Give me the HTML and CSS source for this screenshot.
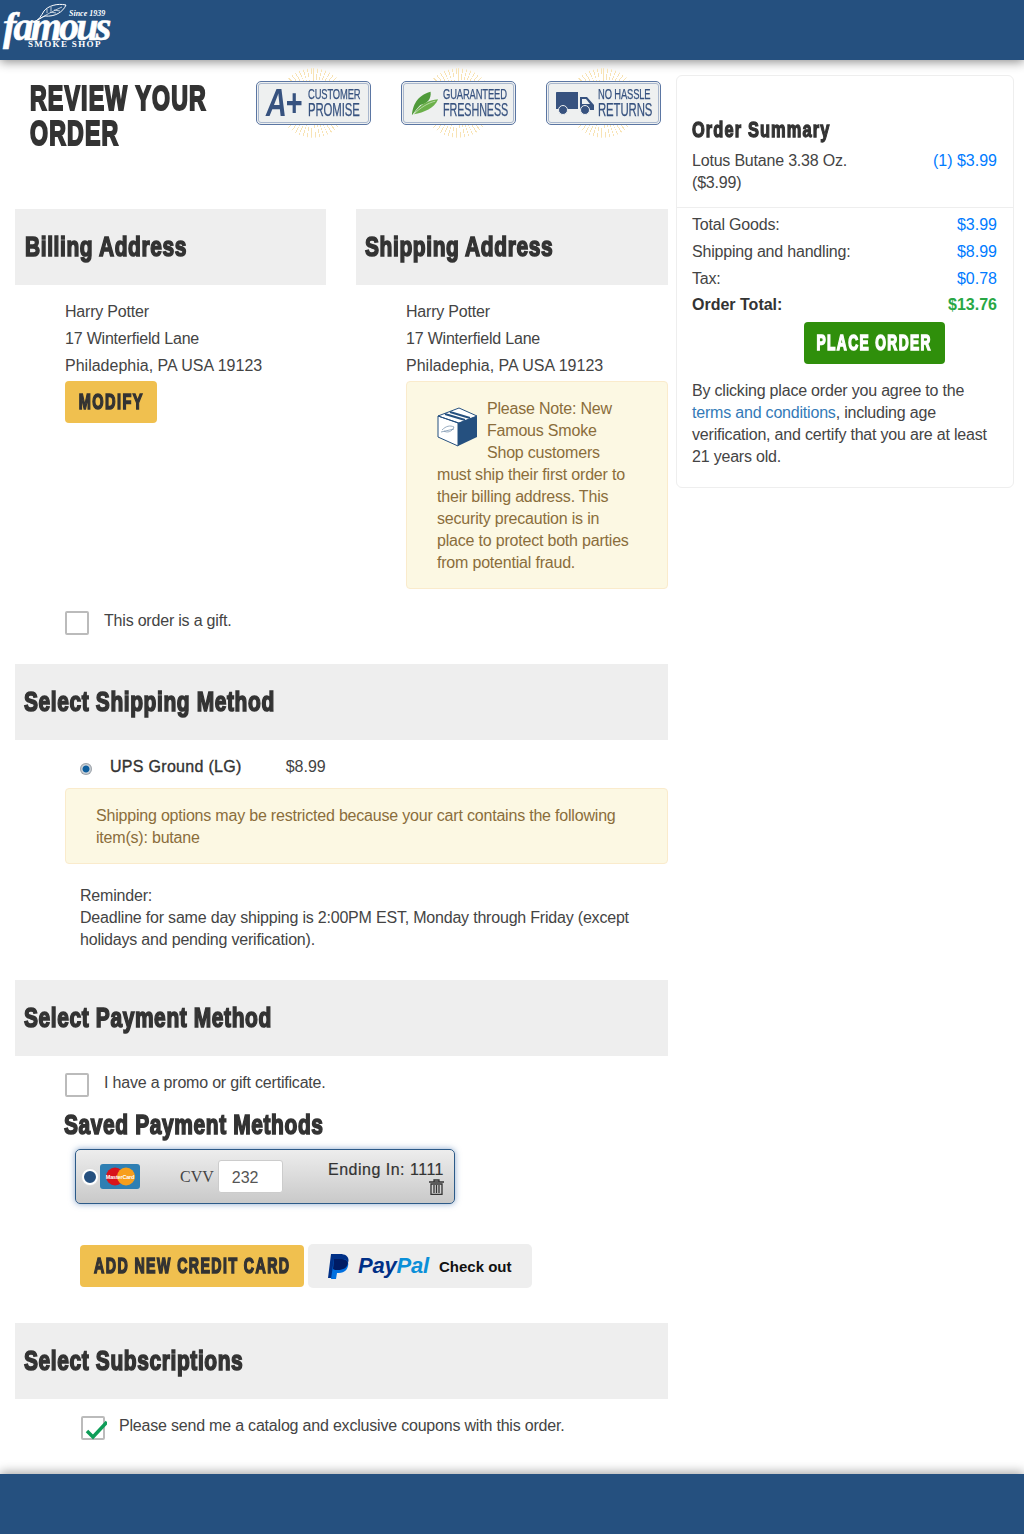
FILE: index.html
```html
<!DOCTYPE html>
<html lang="en">
<head>
<meta charset="utf-8">
<title>Review Your Order</title>
<link rel="stylesheet" href="styles.css">
</head>
<body>
<header class="site-header">
  <div class="logo">
    <svg class="logo-leaf" viewBox="0 0 34 20"><path d="M1 19C6 17 8 13 11 8C15 3 24 0 33 2C30 9 22 14 12 13C9 14 5 17 1 19Z" fill="none" stroke="#fff" stroke-width="1"/><path d="M6 16C13 12 20 8 29 4M14 10L14 6M18 8L18 4M17 9L23 10M21 7L27 8" fill="none" stroke="#fff" stroke-width=".7"/></svg>
    <span class="logo-since">Since 1939</span>
    <span class="logo-name">famous</span>
    <span class="logo-sub">SMOKE SHOP</span>
  </div>
</header>
<main class="layout">
  <div class="main-col">
    <div class="top-row">
      <h1 class="page-title"><span class="squeeze">REVIEW YOUR</span><span class="squeeze">ORDER</span></h1>
      <div class="badges">
        <div class="badge"><span class="rays"></span><div class="badge-box">
          <span class="badge-aplus">A+</span>
          <span class="badge-text"><span>CUSTOMER</span><b>PROMISE</b></span>
        </div></div>
        <div class="badge"><span class="rays"></span><div class="badge-box">
          <svg class="badge-icon" viewBox="0 0 30 27"><path d="M1 26C2 16 6 5 21 1C22 9 17 14 10 15C7 18 4 22 1 26Z" fill="#4f9a3a"/><path d="M3 25C9 14 19 10 29 9C25 19 14 23 3 25Z" fill="#6bb04a"/><path d="M3 25C10 18 18 13 26 11" stroke="#dcecd0" stroke-width=".7" fill="none"/></svg>
          <span class="badge-text fresh"><span>GUARANTEED</span><b>FRESHNESS</b></span>
        </div></div>
        <div class="badge"><span class="rays"></span><div class="badge-box">
          <svg class="badge-icon truck" viewBox="0 0 38 23"><path d="M0 1C0 .4.4 0 1 0H22V17H0ZM24 5H31L38 13V18H24Z" fill="#37527f"/><path d="M26 7H30L34 12H26Z" fill="#eef0f0"/><circle cx="7" cy="18" r="4.5" fill="#37527f" stroke="#eef0f0"/><circle cx="29" cy="18" r="4.5" fill="#37527f" stroke="#eef0f0"/></svg>
          <span class="badge-text"><span>NO HASSLE</span><b>RETURNS</b></span>
        </div></div>
      </div>
    </div>

    <div class="address-row">
      <section class="address">
        <h2 class="band"><span class="squeeze">Billing Address</span></h2>
        <div class="address-body">
          <p>Harry Potter</p>
          <p>17 Winterfield Lane</p>
          <p class="city">Philadephia, PA USA 19123</p>
          <button class="btn btn-yellow btn-modify"><span class="squeeze">MODIFY</span></button>
        </div>
      </section>
      <section class="address">
        <h2 class="band"><span class="squeeze">Shipping Address</span></h2>
        <div class="address-body">
          <p>Harry Potter</p>
          <p>17 Winterfield Lane</p>
          <p class="city">Philadephia, PA USA 19123</p>
          <div class="alert alert-note">
            <svg class="box-icon" viewBox="0 0 40 40"><path d="M1 9L22 1L40 9L22 16ZM1 9V30L21 39V16Z" fill="#fff" stroke="#25507f"/><path d="M21 16L40 9V30L21 39Z" fill="#25507f"/><path d="M8 7L28 13M13 5L33 11" stroke="#25507f" stroke-width="2"/><path d="M5 23C9 19 13 18 17 20C15 25 10 26 7 24M4 25L17 22" fill="none" stroke="#6f8aa8" stroke-width=".7"/></svg>
            Please Note: New Famous Smoke Shop customers must ship their first order to their billing address. This security precaution is in place to protect both parties from potential fraud.
          </div>
        </div>
      </section>
    </div>

    <label class="check-row gift"><span class="checkbox"></span>This order is a gift.</label>

    <h2 class="band band-full shipping-band"><span class="squeeze">Select Shipping Method</span></h2>
    <div class="ship-option"><span class="radio-small"></span><span class="ship-name">UPS Ground (LG)</span><span class="price">$8.99</span></div>
    <div class="alert alert-ship">Shipping options may be restricted because your cart contains the following item(s): butane</div>
    <p class="reminder">Reminder:<br>Deadline for same day shipping is 2:00PM EST, Monday through Friday (except holidays and pending verification).</p>

    <h2 class="band band-full payment-band"><span class="squeeze">Select Payment Method</span></h2>
    <label class="check-row promo"><span class="checkbox"></span>I have a promo or gift certificate.</label>
    <h3 class="saved-title"><span class="squeeze">Saved Payment Methods</span></h3>
    <div class="saved-card">
      <span class="radio-big"></span>
      <svg class="mc-icon" viewBox="0 0 40 25"><rect width="40" height="25" rx="3" fill="#2f7fb3"/><circle cx="15" cy="12.500" r="9" fill="#d8131b"/><circle cx="26" cy="12.500" r="9" fill="#f79e1b"/><text x="20" y="14.500" class="mc-text">MasterCard</text></svg>
      <span class="cvv-label">CVV</span>
      <span class="cvv-input">232</span>
      <span class="ending">Ending In: 1111</span>
      <svg class="trash" viewBox="0 0 15 16"><path d="M0 3H15M5 3V1H10V3M2 5V15.500H13V5ZM5 6V14M7.500 6V14M10 6V14" fill="none" stroke="#333" stroke-width="1.300"/></svg>
    </div>
    <div class="pay-actions">
      <button class="btn btn-yellow btn-add"><span class="squeeze">ADD NEW CREDIT CARD</span></button>
      <div class="paypal">
        <svg class="pp-mark" viewBox="0 0 22 25"><path d="M3 0H12C18 0 22 3 20 9C19 14 15 16 10 16H7L5 24H0Z" fill="#003087"/><path d="M6 5H14C19 5 21 8 20 12C19 17 15 19 11 19H9L8 25H3Z" fill="#0070e0"/><path d="M6 5H14C17 5 19 6 20 9C19 14 15 16 10 16H7L5 15Z" fill="#001c64"/></svg>
        <span class="pp-word"><i>Pay</i><em>Pal</em></span>
        <span class="pp-check">Check out</span>
      </div>
    </div>

    <h2 class="band band-full subs-band"><span class="squeeze">Select Subscriptions</span></h2>
    <label class="check-row catalog"><span class="checkbox"><svg class="tick" viewBox="0 0 24 24"><path d="M4 15L10 21L24 6" fill="none" stroke="#0e9d58" stroke-width="3.500"/></svg></span>Please send me a catalog and exclusive coupons with this order.</label>
  </div>

  <aside class="summary">
    <div class="summary-top">
      <h3 class="summary-title"><span class="squeeze">Order Summary</span></h3>
      <div class="item"><span class="item-name">Lotus Butane 3.38 Oz. ($3.99)</span><span class="blue">(1) $3.99</span></div>
    </div>
    <div class="summary-bottom">
      <div class="total-row"><span>Total Goods:</span><span class="blue">$3.99</span></div>
      <div class="total-row"><span>Shipping and handling:</span><span class="blue">$8.99</span></div>
      <div class="total-row short"><span>Tax:</span><span class="blue">$0.78</span></div>
      <div class="total-row grand"><span>Order Total:</span><span class="green">$13.76</span></div>
      <div class="place-wrap"><button class="btn btn-green"><span class="squeeze">PLACE ORDER</span></button></div>
      <p class="terms">By clicking place order you agree to the <a href="#">terms and conditions</a>, including age verification, and certify that you are at least 21 years old.</p>
    </div>
  </aside>
</main>
<footer class="site-footer"></footer>
</body>
</html>
```
FILE: styles.css
```css
* { box-sizing: border-box; }
html, body { margin: 0; padding: 0; }
body {
  font-family: "Liberation Sans", Arial, sans-serif;
  font-size: 16px;
  line-height: 22px;
  letter-spacing: -.2px;
  color: #444;
  background: #fff;
  width: 1024px;
  height: 1534px;
  overflow: hidden;
}
p { margin: 0; }

/* header and footer */
.site-header {
  height: 60px;
  background: #25507f;
  box-shadow: 0 2px 10px rgba(0, 0, 0, .45);
  position: relative;
}
.logo { position: relative; width: 115px; height: 60px; color: #fff; }
.logo-leaf { position: absolute; left: 33px; top: 3px; width: 34px; height: 20px; }
.logo-since {
  position: absolute; left: 69px; top: 8px;
  font: italic 700 8px/12px "Liberation Serif", serif;
  letter-spacing: 0;
}
.logo-name {
  position: absolute; left: 3px; top: 6px;
  font: italic 700 40px/42px "Liberation Serif", serif;
  letter-spacing: -2.800px;
  -webkit-text-stroke: .6px #fff;
}
.logo-sub {
  position: absolute; left: 28px; top: 38px;
  font: 700 9px/12px "Liberation Serif", serif;
  letter-spacing: 1.350px;
}
.site-footer {
  position: absolute;
  left: 0; right: 0; top: 1474px;
  height: 60px;
  background: #25507f;
  box-shadow: 0 -2px 10px rgba(0, 0, 0, .35);
}

/* layout */
.layout { display: flex; align-items: flex-start; padding-left: 15px; gap: 8px; }
.main-col { width: 653px; flex: none; }

/* heavy display type: the regular bold squeezed to a condensed width */
.page-title, .band, .saved-title, .summary-title, .btn {
  font-family: "Liberation Sans", sans-serif;
  font-weight: 700;
  -webkit-text-stroke: 1.600px #333;
  color: #333;
  margin: 0;
}
.squeeze {
  display: block;
  white-space: nowrap;
  transform: scaleX(var(--squeeze, .775));
  transform-origin: left center;
}

.top-row { display: flex; height: 149px; padding-top: 20px; }
.page-title {
  --squeeze: .66;
  width: 226px; padding-left: 15px;
  font-size: 35px; line-height: 35px; letter-spacing: 1.800px;
  -webkit-text-stroke-width: 2.200px;
}
.badges { display: flex; gap: 30px; margin-left: 15px; }
.badge { position: relative; width: 115px; height: 70px; margin-top: -12px; }
.rays {
  position: absolute; left: 22px; top: 0; width: 70px; height: 70px;
  border-radius: 50%;
  background: repeating-conic-gradient(#f8e3b4 0 1.500deg, transparent 1.500deg 7deg);
  -webkit-mask: radial-gradient(circle, transparent 20px, #000 21px);
  mask: radial-gradient(circle, transparent 20px, #000 21px);
}
.badge-box {
  position: absolute; left: 0; top: 13px; width: 115px; height: 44px;
  display: flex; align-items: center;
  padding-left: 9px; gap: 4px;
  background: #eef0f0;
  border: 1px solid #5b76a3;
  outline: 1px solid #a9b7cd;
  outline-offset: -3px;
  border-radius: 5px;
  color: #37527f;
}
.badge-aplus {
  font: italic 700 38px/34px "Liberation Sans", sans-serif;
  letter-spacing: -2px; width: 38px; flex: none;
  transform: scaleX(.76); transform-origin: left center;
  white-space: nowrap;
}
.badge-icon { width: 28px; height: 27px; flex: none; }
.truck { width: 38px; height: 23px; }
.badge-text {
  display: flex; flex-direction: column;
  font: 400 14px/13px "Liberation Sans", sans-serif;
  letter-spacing: -.200px;
  white-space: nowrap;
  -webkit-text-stroke: .25px #37527f;
}
.badge-text span { transform: scaleX(.67); transform-origin: left center; }
.badge-text b {
  font-weight: 400; font-size: 19px; line-height: 17px;
  transform: scaleX(.6); transform-origin: left center;
}
.fresh b { transform: scaleX(.57); }

/* section bands */
.band {
  background: #eee;
  height: 76px;
  font-size: 27px;
  line-height: 76px;
  letter-spacing: .800px;
}
.address-row { display: grid; grid-template-columns: 311px 312px; column-gap: 30px; }
.address .band { padding-left: 10px; }
.address:last-child .band { padding-left: 9px; }
.band-full { padding-left: 9px; }

.address-body { padding: 13px 0 0 50px; line-height: 27px; }
.city { letter-spacing: 0; }
.alert {
  background: #fcf8e3;
  border: 1px solid #faebcc;
  border-radius: 4px;
  color: #8a6d3b;
  line-height: 22px;
}
.alert-note { margin-top: 2px; padding: 16px 30px 5px; height: 208px; }
.box-icon { float: left; width: 40px; height: 40px; margin: 9px 10px 10px 0; }

.btn {
  display: flex;
  align-items: center;
  justify-content: center;
  border: 0;
  border-radius: 4px;
  height: 42px;
  font-size: 22px;
  line-height: 42px;
  letter-spacing: 2.200px;
  padding: 0;
}
.btn .squeeze { transform-origin: center; }
.btn-yellow { background: #f0c04f; }
.btn-modify { width: 92px; margin-top: 2px; --squeeze: .66; }
.btn-add { width: 224px; --squeeze: .645; flex: none; }
.btn-green {
  background: #2f8f0b; color: #fff; -webkit-text-stroke-color: #fff;
  width: 141px; --squeeze: .626;
}

.check-row { display: flex; gap: 15px; margin-left: 50px; line-height: 20px; }
.checkbox {
  display: block; width: 24px; height: 24px; flex: none;
  border: 2px solid #bbb; border-radius: 2px; position: relative;
}
.gift { margin-top: 22px; }
.shipping-band { margin-top: 29px; }

.ship-option { display: flex; align-items: center; margin: 16px 0 0 65px; height: 22px; }
.radio-small {
  width: 12px; height: 12px; border-radius: 50%;
  background: radial-gradient(circle, #0f5f9e 0 3px, #d8dde2 4px, #8a9199 6px);
  margin-top: 3px;
}
.ship-name { margin: 0 44px 0 18px; letter-spacing: .300px; color: #333; -webkit-text-stroke: .35px #333; }
.price { letter-spacing: 0; }

.alert-ship { margin: 10px 0 0 50px; height: 76px; padding: 16px 30px; }
.reminder { margin: 21px 20px 0 65px; }
.payment-band { margin-top: 29px; }
.promo { margin-top: 17px; }
.saved-title {
  --squeeze: .775;
  margin: 13px 0 0 49px;
  font-size: 27px; line-height: 30px; letter-spacing: .800px;
}
.saved-card {
  position: relative;
  margin: 9px 0 0 60px;
  width: 380px; height: 55px;
  display: flex; align-items: center;
  border: 1px solid #2c5a88;
  border-radius: 5px;
  background: linear-gradient(#ededed, #c9c9c9);
  box-shadow: 0 0 6px rgba(64, 110, 170, .6);
  padding-left: 6px;
}
.radio-big {
  width: 16px; height: 16px; border-radius: 50%; flex: none;
  background: #25507f; border: 2px solid #fff; box-shadow: 0 0 0 1px #ddd;
}
.mc-icon { width: 40px; height: 25px; margin-left: 2px; flex: none; }
.mc-text { font: 700 5.500px "Liberation Sans", sans-serif; fill: #fff; text-anchor: middle; }
.cvv-label { margin-left: 40px; font-family: "Liberation Serif", serif; font-size: 16px; letter-spacing: 0; }
.cvv-input {
  margin-left: 4px; width: 65px; height: 33px;
  background: #fff; border: 1px solid #ccc; border-radius: 3px;
  padding-left: 13px; line-height: 33px; color: #555; letter-spacing: 0;
}
.ending {
  position: absolute; right: 10px; top: 9px;
  letter-spacing: .500px; color: #333; -webkit-text-stroke: .2px #333;
}
.trash { position: absolute; right: 10px; top: 29px; width: 15px; height: 16px; }

.pay-actions { display: flex; align-items: center; gap: 4px; margin: 40px 0 0 65px; }
.paypal {
  width: 224px; height: 44px;
  background: #eee; border-radius: 5px;
  display: flex; align-items: center; padding-left: 20px;
}
.pp-mark { width: 22px; height: 25px; flex: none; }
.pp-word {
  margin-left: 8px;
  font: italic 700 22px/26px "Liberation Sans", sans-serif;
  letter-spacing: -.200px;
}
.pp-word i { color: #003087; }
.pp-word em { color: #0a8fd8; }
.pp-check { margin-left: 10px; font-weight: 700; font-size: 15px; color: #111; margin-top: 2px; letter-spacing: 0; }

.subs-band { margin-top: 35px; }
.catalog { margin: 17px 0 0 66px; gap: 14px; }
.tick { position: absolute; left: 0; top: -2px; width: 24px; height: 24px; }

/* order summary */
.summary {
  width: 338px; height: 413px; flex: none; margin-top: 15px;
  border: 1px solid #eee; border-radius: 6px;
}
.summary-top { padding: 40px 16px 0 15px; height: 132px; border-bottom: 1px solid #eee; }
.summary-title {
  --squeeze: .745;
  font-size: 22px; line-height: 28px; letter-spacing: 1.500px;
  -webkit-text-stroke-width: 1.300px;
}
.item { display: flex; justify-content: space-between; margin-top: 6px; }
.item-name { width: 170px; }
.blue, .green { letter-spacing: 0; }
.blue { color: #007bff; }
.green { color: #28a745; font-weight: 700; }
.summary-bottom { padding: 6px 16px 0 15px; }
.total-row { display: flex; justify-content: space-between; height: 27px; line-height: 22px; }
.short { height: 26px; }
.grand { font-weight: 700; height: 26px; letter-spacing: 0; color: #333; }
.place-wrap { padding-left: 112px; margin-top: 2px; }
.terms { margin-top: 16px; }
.terms a { color: #337ab7; text-decoration: none; }
```
